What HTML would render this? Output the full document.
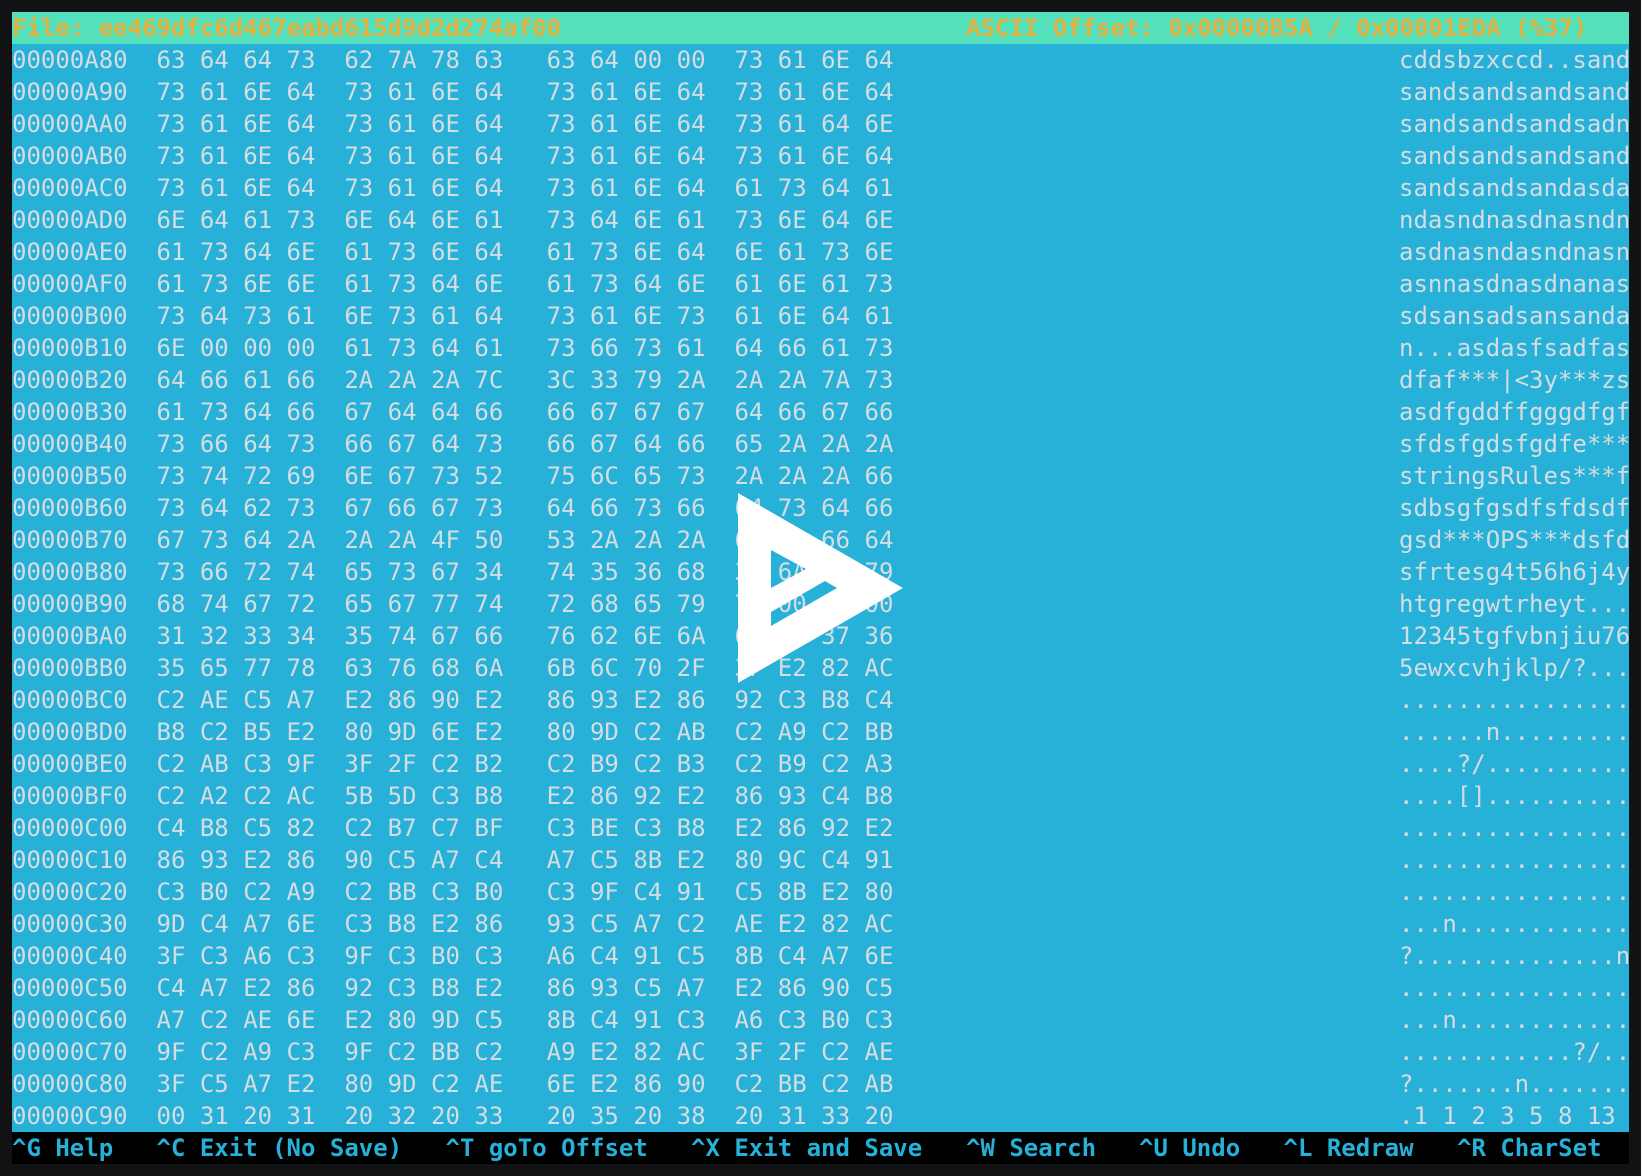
<!DOCTYPE html>
<html><head><meta charset="utf-8"><style>
html,body{margin:0;padding:0;width:1641px;height:1176px;background:#111214;overflow:hidden}
#t{position:absolute;left:12px;top:12px;width:1617px;height:1152px;background:#27b0d8;font-family:"DejaVu Sans Mono","Liberation Mono",monospace;font-size:24px;color:#d5dde2;white-space:pre}
.r{position:absolute;left:0;height:32px;line-height:32px;width:1617px}
.r i{font-style:normal;position:absolute;left:1387px;top:0}
#h{top:0;background:#55e0bc;color:#e0b040;font-weight:bold}
#h span{position:absolute;left:954px}
#f{top:1120px;background:#000;color:#27b0d8;font-weight:bold}
#f span{position:absolute;top:0}
svg{position:absolute;left:0;top:0}
</style></head><body>
<div id="t">
<div class="r" id="h">File: ee469dfc6d467eabd615d9d2d274af00<span>ASCII Offset: 0x00000B5A / 0x00001EDA (%37)</span></div>
<div class="r" style="top:32px">00000A80  63 64 64 73  62 7A 78 63   63 64 00 00  73 61 6E 64<i>cddsbzxccd..sand</i></div>
<div class="r" style="top:64px">00000A90  73 61 6E 64  73 61 6E 64   73 61 6E 64  73 61 6E 64<i>sandsandsandsand</i></div>
<div class="r" style="top:96px">00000AA0  73 61 6E 64  73 61 6E 64   73 61 6E 64  73 61 64 6E<i>sandsandsandsadn</i></div>
<div class="r" style="top:128px">00000AB0  73 61 6E 64  73 61 6E 64   73 61 6E 64  73 61 6E 64<i>sandsandsandsand</i></div>
<div class="r" style="top:160px">00000AC0  73 61 6E 64  73 61 6E 64   73 61 6E 64  61 73 64 61<i>sandsandsandasda</i></div>
<div class="r" style="top:192px">00000AD0  6E 64 61 73  6E 64 6E 61   73 64 6E 61  73 6E 64 6E<i>ndasndnasdnasndn</i></div>
<div class="r" style="top:224px">00000AE0  61 73 64 6E  61 73 6E 64   61 73 6E 64  6E 61 73 6E<i>asdnasndasndnasn</i></div>
<div class="r" style="top:256px">00000AF0  61 73 6E 6E  61 73 64 6E   61 73 64 6E  61 6E 61 73<i>asnnasdnasdnanas</i></div>
<div class="r" style="top:288px">00000B00  73 64 73 61  6E 73 61 64   73 61 6E 73  61 6E 64 61<i>sdsansadsansanda</i></div>
<div class="r" style="top:320px">00000B10  6E 00 00 00  61 73 64 61   73 66 73 61  64 66 61 73<i>n...asdasfsadfas</i></div>
<div class="r" style="top:352px">00000B20  64 66 61 66  2A 2A 2A 7C   3C 33 79 2A  2A 2A 7A 73<i>dfaf***|&lt;3y***zs</i></div>
<div class="r" style="top:384px">00000B30  61 73 64 66  67 64 64 66   66 67 67 67  64 66 67 66<i>asdfgddffgggdfgf</i></div>
<div class="r" style="top:416px">00000B40  73 66 64 73  66 67 64 73   66 67 64 66  65 2A 2A 2A<i>sfdsfgdsfgdfe***</i></div>
<div class="r" style="top:448px">00000B50  73 74 72 69  6E 67 73 52   75 6C 65 73  2A 2A 2A 66<i>stringsRules***f</i></div>
<div class="r" style="top:480px">00000B60  73 64 62 73  67 66 67 73   64 66 73 66  64 73 64 66<i>sdbsgfgsdfsfdsdf</i></div>
<div class="r" style="top:512px">00000B70  67 73 64 2A  2A 2A 4F 50   53 2A 2A 2A  64 73 66 64<i>gsd***OPS***dsfd</i></div>
<div class="r" style="top:544px">00000B80  73 66 72 74  65 73 67 34   74 35 36 68  36 6A 34 79<i>sfrtesg4t56h6j4y</i></div>
<div class="r" style="top:576px">00000B90  68 74 67 72  65 67 77 74   72 68 65 79  74 00 00 00<i>htgregwtrheyt...</i></div>
<div class="r" style="top:608px">00000BA0  31 32 33 34  35 74 67 66   76 62 6E 6A  69 75 37 36<i>12345tgfvbnjiu76</i></div>
<div class="r" style="top:640px">00000BB0  35 65 77 78  63 76 68 6A   6B 6C 70 2F  3F E2 82 AC<i>5ewxcvhjklp/?...</i></div>
<div class="r" style="top:672px">00000BC0  C2 AE C5 A7  E2 86 90 E2   86 93 E2 86  92 C3 B8 C4<i>................</i></div>
<div class="r" style="top:704px">00000BD0  B8 C2 B5 E2  80 9D 6E E2   80 9D C2 AB  C2 A9 C2 BB<i>......n.........</i></div>
<div class="r" style="top:736px">00000BE0  C2 AB C3 9F  3F 2F C2 B2   C2 B9 C2 B3  C2 B9 C2 A3<i>....?/..........</i></div>
<div class="r" style="top:768px">00000BF0  C2 A2 C2 AC  5B 5D C3 B8   E2 86 92 E2  86 93 C4 B8<i>....[]..........</i></div>
<div class="r" style="top:800px">00000C00  C4 B8 C5 82  C2 B7 C7 BF   C3 BE C3 B8  E2 86 92 E2<i>................</i></div>
<div class="r" style="top:832px">00000C10  86 93 E2 86  90 C5 A7 C4   A7 C5 8B E2  80 9C C4 91<i>................</i></div>
<div class="r" style="top:864px">00000C20  C3 B0 C2 A9  C2 BB C3 B0   C3 9F C4 91  C5 8B E2 80<i>................</i></div>
<div class="r" style="top:896px">00000C30  9D C4 A7 6E  C3 B8 E2 86   93 C5 A7 C2  AE E2 82 AC<i>...n............</i></div>
<div class="r" style="top:928px">00000C40  3F C3 A6 C3  9F C3 B0 C3   A6 C4 91 C5  8B C4 A7 6E<i>?..............n</i></div>
<div class="r" style="top:960px">00000C50  C4 A7 E2 86  92 C3 B8 E2   86 93 C5 A7  E2 86 90 C5<i>................</i></div>
<div class="r" style="top:992px">00000C60  A7 C2 AE 6E  E2 80 9D C5   8B C4 91 C3  A6 C3 B0 C3<i>...n............</i></div>
<div class="r" style="top:1024px">00000C70  9F C2 A9 C3  9F C2 BB C2   A9 E2 82 AC  3F 2F C2 AE<i>............?/..</i></div>
<div class="r" style="top:1056px">00000C80  3F C5 A7 E2  80 9D C2 AE   6E E2 86 90  C2 BB C2 AB<i>?.......n.......</i></div>
<div class="r" style="top:1088px">00000C90  00 31 20 31  20 32 20 33   20 35 20 38  20 31 33 20<i>.1 1 2 3 5 8 13 </i></div>
<div class="r" id="f"><span style="left:0">^G Help</span><span style="left:144.5px">^C Exit (No Save)</span><span style="left:433.5px">^T goTo Offset</span><span style="left:679px">^X Exit and Save</span><span style="left:954px">^W Search</span><span style="left:1127px">^U Undo</span><span style="left:1271.5px">^L Redraw</span><span style="left:1445px">^R CharSet</span></div>
<svg width="1617" height="1152" viewBox="12 12 1617 1152">
<path fill="#fff" fill-rule="evenodd" d="M738 493 L903 588 L738 683 Z M771 550 L806 569 L771 588 Z M771 612 L825 581 L837 588 L771 626 Z"/>
</svg>
</div>
</body></html>
